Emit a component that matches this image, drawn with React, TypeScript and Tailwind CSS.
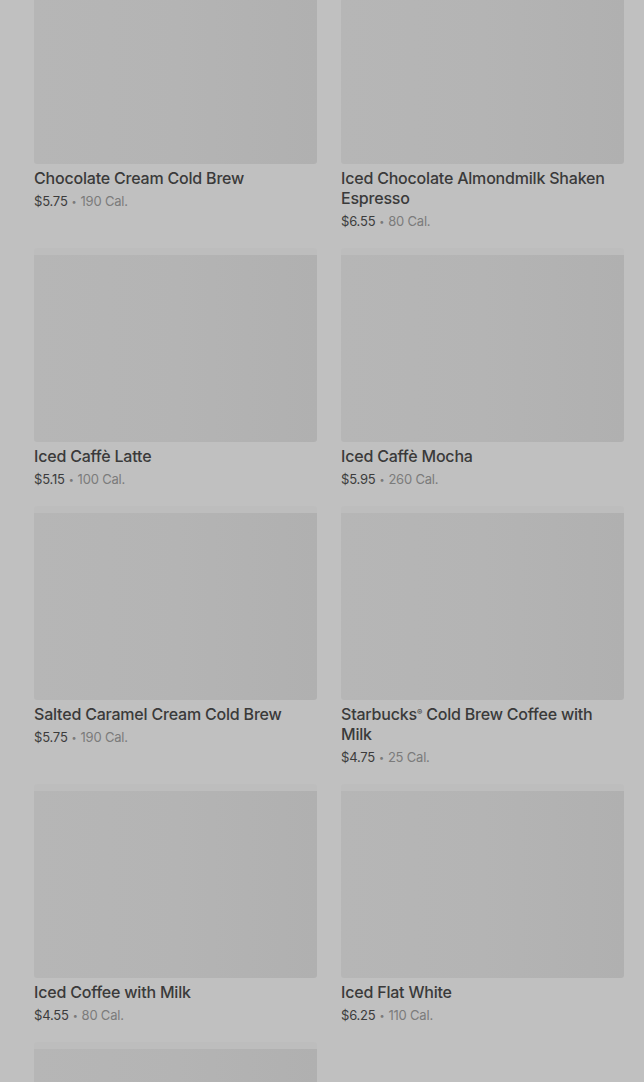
type Drink = {
  name: string
  price: string
  cal: string
}

const drinks: Drink[] = [
  { name: 'Chocolate Cream Cold Brew', price: '$5.75', cal: '190 Cal.' },
  { name: 'Iced Chocolate Almondmilk Shaken Espresso', price: '$6.55', cal: '80 Cal.' },
  { name: 'Iced Caffè Latte', price: '$5.15', cal: '100 Cal.' },
  { name: 'Iced Caffè Mocha', price: '$5.95', cal: '260 Cal.' },
  { name: 'Salted Caramel Cream Cold Brew', price: '$5.75', cal: '190 Cal.' },
  { name: 'Starbucks® Cold Brew Coffee with Milk', price: '$4.75', cal: '25 Cal.' },
  { name: 'Iced Coffee with Milk', price: '$4.55', cal: '80 Cal.' },
  { name: 'Iced Flat White', price: '$6.25', cal: '110 Cal.' },
  { name: 'Iced Shaken Espresso', price: '$5.45', cal: '120 Cal.' },
]

function DrinkCard({ name, price, cal }: Drink) {
  const parts = name.split('®')
  return (
    <div className="flex flex-col">
      {/* loading placeholder for the product photo */}
      <div className="h-[194px] rounded-[3px] border-t-[7px] border-[#bdbdbd] bg-gradient-to-r from-[#b6b6b6] via-[#b4b4b4] to-[#b0b0b0]" />
      <h3 className="mt-1 text-[16px] leading-5 font-medium text-[#3a3a3a] tracking-[-0.2px]">
        {parts.length > 1 ? (
          <>
            {parts[0]}
            <span className="relative -top-[5px] text-[8px] leading-none">®</span>
            {parts[1]}
          </>
        ) : (
          name
        )}
      </h3>
      <p className="mt-[3px] h-5 text-[13px] leading-5 text-[#3c3c3c] tracking-[-0.2px]">
        {price}
        <span className="relative -top-[1px] mx-[4px] text-[9px] leading-none text-[#7a7a7a]">•</span>
        <span className="text-[#7b7b7b]">{cal}</span>
      </p>
    </div>
  )
}

export default function App() {
  return (
    <div className="h-[1082px] overflow-hidden bg-[#c0c0c0] font-['Inter',sans-serif]">
      <div className="mt-[-30px] pl-[34px] pr-[20px] grid grid-cols-2 gap-x-6 gap-y-[17px]">
        {drinks.map((d) => (
          <DrinkCard key={d.name} {...d} />
        ))}
      </div>
    </div>
  )
}
